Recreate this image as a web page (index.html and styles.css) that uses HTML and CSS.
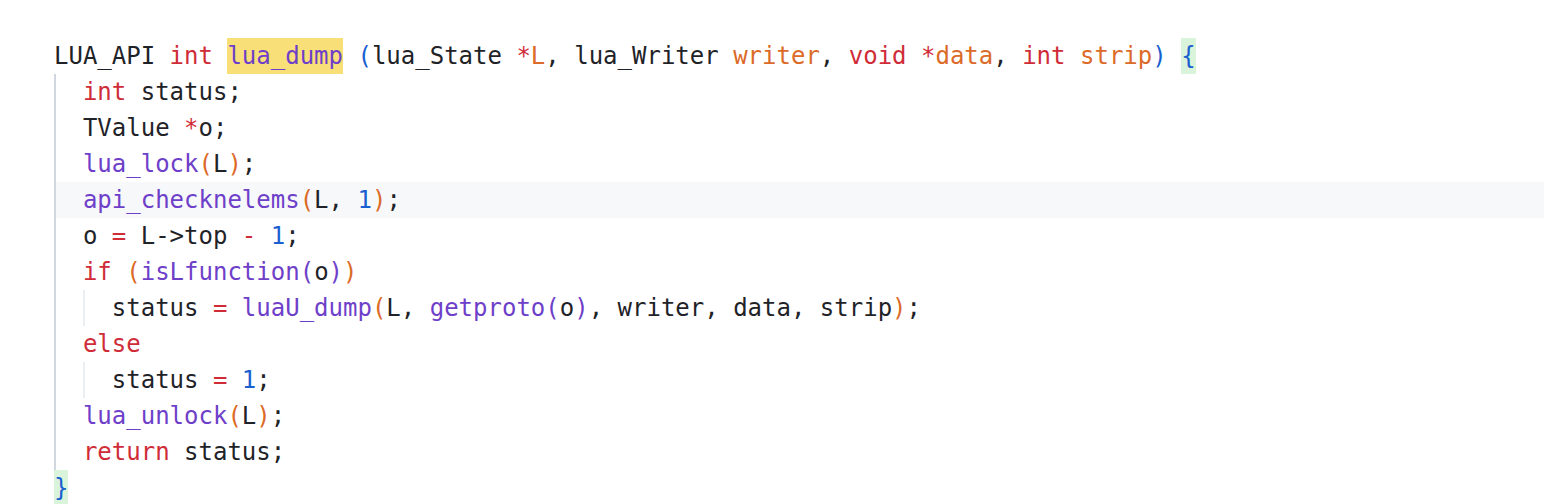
FILE: index.html
```html
<!DOCTYPE html>
<html>
<head>
<meta charset="utf-8">
<link rel="stylesheet" href="styles.css">
</head>
<body>
<div class="code">
<div class="line">LUA_API <span class="k">int</span> <span class="f mark">lua_dump</span> <span class="b">(</span>lua_State <span class="k">*</span><span class="o">L</span>, lua_Writer <span class="o">writer</span>, <span class="k">void</span> <span class="k">*</span><span class="o">data</span>, <span class="k">int</span> <span class="o">strip</span><span class="b">)</span> <span class="b match">{</span></div>
<div class="block">
<div class="line">  <span class="k">int</span> status;</div>
<div class="line">  TValue <span class="k">*</span>o;</div>
<div class="line">  <span class="f">lua_lock</span><span class="o">(</span>L<span class="o">)</span>;</div>
<div class="line hl">  <span class="f">api_checknelems</span><span class="o">(</span>L, <span class="n">1</span><span class="o">)</span>;</div>
<div class="line">  o <span class="k">=</span> L-&gt;top <span class="k">-</span> <span class="n">1</span>;</div>
<div class="line">  <span class="k">if</span> <span class="o">(</span><span class="f">isLfunction</span><span class="p">(</span>o<span class="p">)</span><span class="o">)</span></div>
<div class="line inner">    status <span class="k">=</span> <span class="f">luaU_dump</span><span class="o">(</span>L, <span class="f">getproto</span><span class="p">(</span>o<span class="p">)</span>, writer, data, strip<span class="o">)</span>;</div>
<div class="line">  <span class="k">else</span></div>
<div class="line inner">    status <span class="k">=</span> <span class="n">1</span>;</div>
<div class="line">  <span class="f">lua_unlock</span><span class="o">(</span>L<span class="o">)</span>;</div>
<div class="line">  <span class="k">return</span> status;</div>
</div>
<div class="line"><span class="b match">}</span></div>
</div>
</body>
</html>
```

FILE: styles.css
```css
html, body {
  margin: 0;
  padding: 0;
  background: #ffffff;
}

.code {
  padding: 38px 0 0 54px;
  font-family: "DejaVu Sans Mono", monospace;
  font-size: 24px;
  line-height: 36px;
  color: #1f2328;
}

.line {
  height: 36px;
  white-space: pre;
}

.block {
  position: relative;
}

.block::before {
  content: "";
  position: absolute;
  left: 0;
  top: 0;
  bottom: 0;
  width: 2px;
  background: #d0d7de;
  z-index: 1;
}

.hl {
  background: #f6f8fa;
}

.inner {
  position: relative;
}

.inner::before {
  content: "";
  position: absolute;
  left: 29px;
  top: 0;
  bottom: 0;
  width: 2px;
  background: #eceff2;
}

.k { color: #cf2c38; }
.f { color: #6e40c9; }
.o { color: #dc6a28; }
.b { color: #1a5fd0; }
.n { color: #1a5fd0; }
.p { color: #6e40c9; }

.mark {
  display: inline-block;
  height: 36px;
  background: #f9df78;
}

.match {
  display: inline-block;
  height: 36px;
  background: #daf4db;
}
```
